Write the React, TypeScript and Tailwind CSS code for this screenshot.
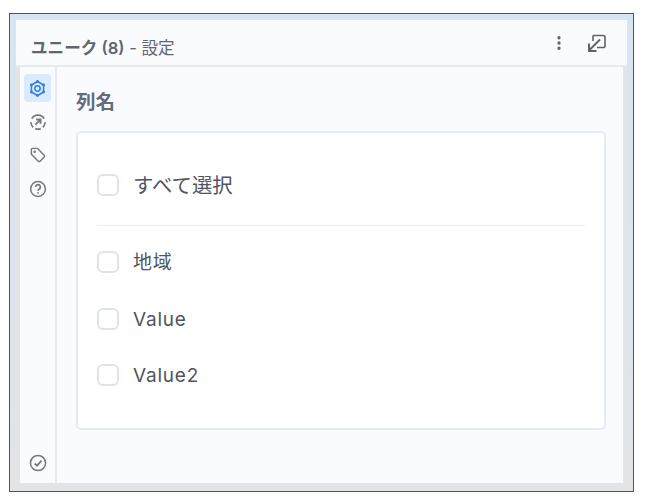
import { MoreVertical } from 'lucide-react'

const FONT = '[font-family:Inter,"Noto_Sans_CJK_JP",sans-serif]'

const GEAR_POINTS = [
  [10, 2.6],
  [16.4, 6.3],
  [16.4, 13.7],
  [10, 17.4],
  [3.6, 13.7],
  [3.6, 6.3],
]

function Check({ label, big = false }: { label: string; big?: boolean }) {
  return (
    <label className="flex items-center">
      <span className="w-[22px] h-[22px] rounded-[6px] border-2 border-[#dfe3ec] bg-white shrink-0" />
      <span
        className={`ml-[14px] pt-[2px] text-[#50555f] leading-[24px] ${
          big ? 'text-[20.4px]' : 'text-[19px] tracking-[0.8px]'
        }`}
      >
        {label}
      </span>
    </label>
  )
}

function SideIcon({ children, active = false }: { children: React.ReactNode; active?: boolean }) {
  return (
    <div
      className={`w-[27px] h-[28px] ml-[4px] rounded-[4px] flex items-center justify-center ${
        active ? 'bg-[#dcebfb] text-[#2f80e4]' : 'text-[#74787f]'
      }`}
    >
      {children}
    </div>
  )
}

export default function App() {
  return (
    <div className={`w-[653px] h-[502px] bg-white pt-[13px] pl-[9px] ${FONT}`}>
      <div className="w-[625px] h-[479px] border border-[#2d5f80] bg-gradient-to-b from-[#d7e5f3] to-[#e3e4e6] flex flex-col overflow-hidden">
        <div className="h-[6px] shrink-0" />
        <div className="flex-1 flex flex-col mx-[6px] bg-[#e3e4e6] pb-[8px] min-h-0">
          <header className="h-[47px] bg-[#fafbfd] flex items-center shrink-0 pl-[15px] pr-[19px] border-b-2 border-[#e6ebf3]">
            <h1 className="text-[16.6px] text-[#5f6673] mt-[12px]">
              <span className="font-semibold">ユニーク (8)</span> - 設定
            </h1>
            <div className="ml-auto flex items-center gap-[18px] text-[#5e636c]">
              <MoreVertical size={18} strokeWidth={2.4} />
              <svg width="22" height="22" viewBox="0 0 22 22" fill="none" stroke="currentColor" strokeWidth="1.6">
                <path d="M7 3.5h10.5a1.5 1.5 0 0 1 1.5 1.5v9a1.5 1.5 0 0 1-1.5 1.5H11" />
                <path d="M7 3.5V9" />
                <path d="M14 7.5L3.5 18" strokeWidth="2" />
                <path d="M3 11.5V19h7.5" strokeWidth="2" />
              </svg>
            </div>
          </header>
          <div className="flex-1 flex min-h-0 pl-[4px] pr-[4px]">
            <aside className="w-[35px] bg-[#fafbfd] pt-[7px] pb-[6px] flex flex-col shrink-0 gap-[5.5px]">
              <SideIcon active>
                <svg width="19" height="19" viewBox="0 0 20 20" fill="none" stroke="currentColor" strokeWidth="1.6">
                  <polygon points="10,2.6 16.4,6.3 16.4,13.7 10,17.4 3.6,13.7 3.6,6.3" strokeLinejoin="round" />
                  {GEAR_POINTS.map(([cx, cy]) => (
                    <circle key={`${cx}-${cy}`} cx={cx} cy={cy} r="1.5" fill="currentColor" stroke="none" />
                  ))}
                  <circle cx="10" cy="10" r="2.8" />
                </svg>
              </SideIcon>
              <SideIcon>
                <svg width="18" height="18" viewBox="0 0 19 19" fill="none" stroke="currentColor" strokeWidth="1.8">
                  <path d="M2.9 6A7.6 7.6 0 0 1 16.1 6" />
                  <path d="M17 9.8a7.6 7.6 0 0 1-2.4 5.3" />
                  <path d="M2 9.8a7.6 7.6 0 0 0 2.4 5.3" />
                  <path d="M6.6 16.5a7.6 7.6 0 0 0 5.8 0" />
                  <path d="M6.8 12.2l5-5M7.6 6.8h4.6v4.6" strokeWidth="2" />
                </svg>
              </SideIcon>
              <SideIcon>
                <svg width="18" height="18" viewBox="0 0 19 19" fill="none" stroke="currentColor" strokeWidth="1.5">
                  <path d="M2.5 3.8A1.3 1.3 0 0 1 3.8 2.5h5l7.2 7.2a1.4 1.4 0 0 1 0 2L11.7 16a1.4 1.4 0 0 1-2 0L2.5 8.8z" strokeLinejoin="round" />
                  <circle cx="6" cy="6" r=".6" fill="currentColor" />
                </svg>
              </SideIcon>
              <SideIcon>
                <svg width="18" height="18" viewBox="0 0 19 19" fill="none" stroke="currentColor" strokeWidth="1.6">
                  <circle cx="9.5" cy="9.5" r="7.8" />
                  <path d="M7 7.5a2.5 2.5 0 1 1 3.6 2.2c-.8.4-1.1.8-1.1 1.6" strokeWidth="1.7" />
                  <circle cx="9.5" cy="13.6" r=".9" fill="currentColor" stroke="none" />
                </svg>
              </SideIcon>
              <div className="mt-auto">
                <SideIcon>
                  <svg width="18" height="18" viewBox="0 0 19 19" fill="none" stroke="currentColor" strokeWidth="1.6">
                    <circle cx="9.5" cy="9.5" r="8" />
                    <path d="M6 10l2.5 2.3L13.2 7" strokeWidth="1.9" />
                  </svg>
                </SideIcon>
              </div>
            </aside>
            <main className="flex-1 bg-[#fafbfe] pl-[19px] pr-[17px] pt-[22px] border-l-2 border-[#e6ebf3]">
              <h2 className="text-[19.5px] leading-[26px] font-semibold text-[#626c7b]">列名</h2>
              <section className="mt-[16px] h-[299px] bg-white border-2 border-[#e6eaf2] rounded-[5px] px-[19px] pt-[39px]">
                <Check label="すべて選択" big />
                <hr className="mt-[27px] border-t border-[#e9ecf2]" />
                <div className="mt-[23px] flex flex-col gap-[30.5px]">
                  <Check label="地域" />
                  <Check label="Value" />
                  <Check label="Value2" />
                </div>
              </section>
            </main>
          </div>
        </div>
      </div>
    </div>
  )
}
